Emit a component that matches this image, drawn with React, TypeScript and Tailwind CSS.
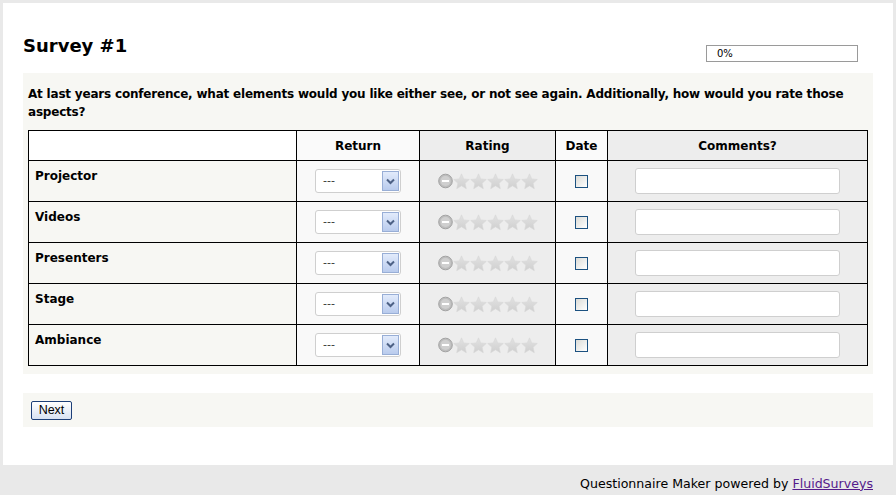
import React from "react";

const rows = ["Projector", "Videos", "Presenters", "Stage", "Ambiance"];

function Star() {
  return (
    <svg width="17" height="17" viewBox="0 0 16 16" className="block">
      <defs>
        <linearGradient id="sg" x1="0" y1="0" x2="0" y2="1">
          <stop offset="0" stopColor="#e2e2e2" />
          <stop offset="1" stopColor="#cfcfcf" />
        </linearGradient>
      </defs>
      <path
        d="M8 0.8 L10.1 5.6 L15.3 6.1 L11.4 9.6 L12.5 14.8 L8 12.1 L3.5 14.8 L4.6 9.6 L0.7 6.1 L5.9 5.6 Z"
        fill="url(#sg)"
        stroke="#d8d8d8"
        strokeWidth="0.6"
      />
    </svg>
  );
}

function Minus() {
  return (
    <svg width="15" height="16" viewBox="0 0 15 16" className="block">
      <circle cx="7.5" cy="8" r="6.8" fill="#bdbdbd" stroke="#a3a3a3" strokeWidth="1" />
      <circle cx="7.5" cy="8" r="5" fill="#cfcfcf" />
      <rect x="4" y="7" width="7" height="2" fill="#ffffff" />
    </svg>
  );
}

function Select() {
  return (
    <div className="mx-auto flex h-[24px] w-[86px] items-center justify-between rounded-[3px] border border-[#cfcfcf] bg-white pl-[7px] pr-[1px]">
      <span className="text-[11px] text-[#333]">---</span>
      <div className="flex h-[20px] w-[17px] items-center justify-center border border-[#98aed6] bg-gradient-to-b from-[#e2ebfb] to-[#b9cbed]">
        <svg width="9" height="7" viewBox="0 0 9 7">
          <path d="M1 1.5 L4.5 5 L8 1.5" fill="none" stroke="#4d6185" strokeWidth="2" />
        </svg>
      </div>
    </div>
  );
}

export default function App() {
  return (
    <div
      className="min-h-[495px] w-full bg-[#e9e9e9] pt-[3px]"
      style={{ fontFamily: '"DejaVu Sans", Verdana, sans-serif' }}
    >
      <div className="mx-[3px] h-[462px] bg-white px-[20px]">
        <div className="flex items-start justify-between pt-[32px]">
          <h1 className="text-[18px] font-bold leading-[22px] text-black">Survey #1</h1>
          <div className="mr-[15px] mt-[10px] h-[17px] w-[152px] border border-[#9a9a9a] bg-white pl-[10px] text-[10px] leading-[15px] text-black">
            0%
          </div>
        </div>

        <div className="mt-[11px] bg-[#f7f7f3] pb-[8px] pl-[5px] pr-[6px] pt-[12px]">
          <p className="text-[12px] font-bold leading-[18px] tracking-[-0.2px] text-black">
            At last years conference, what elements would you like either see, or not see again. Additionally, how would you rate those aspects?
          </p>
          <table className="mt-[9px] w-[839px] table-fixed border-collapse border border-black text-[12px]">
            <colgroup>
              <col className="w-[268px]" />
              <col className="w-[123px]" />
              <col className="w-[136px]" />
              <col className="w-[52px]" />
              <col className="w-[260px]" />
            </colgroup>
            <thead>
              <tr className="h-[30px]">
                <th className="border border-black bg-white"></th>
                <th className="border border-black bg-[#fafafa] font-bold">Return</th>
                <th className="border border-black bg-[#ededed] font-bold">Rating</th>
                <th className="border border-black bg-[#fafafa] font-bold">Date</th>
                <th className="border border-black bg-[#ededed] font-bold">Comments?</th>
              </tr>
            </thead>
            <tbody>
              {rows.map((r) => (
                <tr key={r} className="h-[41px]">
                  <td className="border border-black bg-[#f7f7f3] pl-[6px] pt-[7px] align-top font-bold leading-[16px]">{r}</td>
                  <td className="border border-black bg-[#f9f9f9] align-middle">
                    <Select />
                  </td>
                  <td className="border border-black bg-[#ededed] align-middle">
                    <div className="flex items-center justify-center">
                      <Minus />
                      <Star />
                      <Star />
                      <Star />
                      <Star />
                      <Star />
                    </div>
                  </td>
                  <td className="border border-black bg-[#f9f9f9] align-middle">
                    <div className="mx-auto h-[13px] w-[13px] border border-[#1c5180] bg-gradient-to-br from-[#dcdcd7] to-white" />
                  </td>
                  <td className="border border-black bg-[#ededed] align-middle">
                    <div className="mx-auto h-[26px] w-[205px] rounded-[3px] border border-[#cfcfcf] bg-white" />
                  </td>
                </tr>
              ))}
            </tbody>
          </table>
        </div>

        <div className="mt-[19px] flex h-[34px] items-center bg-[#f7f7f3] pl-[8px]">
          <button
            className="h-[19px] w-[41px] rounded-[2px] border border-[#1d3f78] bg-gradient-to-b from-white to-[#d8e2f2] text-[12.5px] leading-[16px] text-black"
            style={{ fontFamily: '"Liberation Sans", Arial, sans-serif' }}
          >
            Next
          </button>
        </div>
      </div>
      <div className="flex h-[30px] items-center justify-end pr-[23px] pt-[8px] text-[12.6px] text-black">
        <span>
          Questionnaire Maker powered by{" "}
          <a className="text-[#551a8b] underline" href="#">
            FluidSurveys
          </a>
        </span>
      </div>
    </div>
  );
}
